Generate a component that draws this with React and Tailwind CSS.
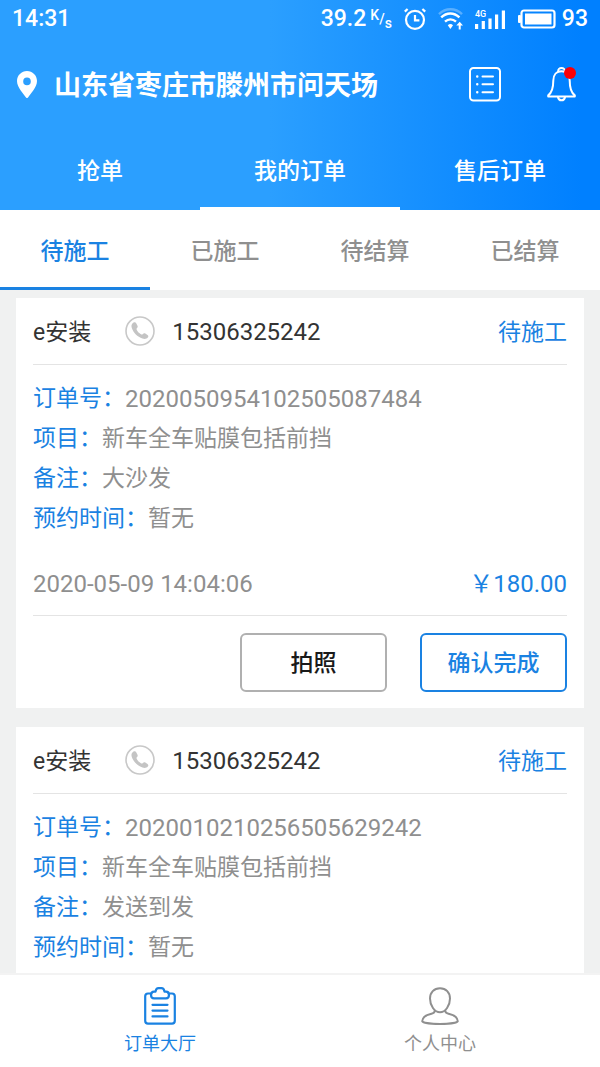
import { useState } from "react";

const topTabs = ["抢单", "我的订单", "售后订单"];
const statusTabs = ["待施工", "已施工", "待结算", "已结算"];

const orders = [
  {
    id: "2020050954102505087484",
    shop: "e安装",
    phone: "15306325242",
    status: "待施工",
    project: "新车全车贴膜包括前挡",
    remark: "大沙发",
    appointment: "暂无",
    time: "2020-05-09 14:04:06",
    price: "￥180.00",
  },
  {
    id: "2020010210256505629242",
    shop: "e安装",
    phone: "15306325242",
    status: "待施工",
    project: "新车全车贴膜包括前挡",
    remark: "发送到发",
    appointment: "暂无",
  },
];

const AlarmIcon = () => (
  <svg width="22" height="22" viewBox="0 0 22 22" fill="none" stroke="currentColor" strokeWidth="2.2">
    <circle cx="11" cy="11.8" r="9" />
    <path d="M11 7v5.4h4.4" />
    <path d="M.8 3.600 3.600 1M21.200 3.600 18.400 1" />
  </svg>
);

const WifiIcon = () => (
  <svg width="25" height="22" viewBox="0 0 25 22" fill="none" stroke="currentColor" strokeWidth="2.4">
    <path d="M1 6.200C7.500-.4 17.500-.4 24 6.200" opacity="0.3" />
    <path d="M3.200 9.400c5.400-5.200 12.800-5.200 18.200 0" />
    <path d="M7 13.600c3.200-3 7.800-3 11 0" />
    <path d="M9.800 17.200c1.600-1.500 3.600-1.500 5.200 0L12.400 21z" fill="currentColor" stroke="none" />
    <path d="M20.700 21.500v-4h-2.400l3.400-3.800 3.300 3.800h-2.300v4z" fill="currentColor" stroke="none" />
  </svg>
);

const SignalIcon = () => (
  <svg width="31" height="22" viewBox="0 0 31 22" fill="currentColor">
    <text x="0" y="9" fontSize="9" fontWeight="500">4G</text>
    <rect x="0" y="16" width="3.200" height="5" />
    <rect x="6.700" y="13" width="3.200" height="8" />
    <rect x="13.400" y="10.500" width="3.200" height="10.500" />
    <rect x="20" y="6.500" width="3.200" height="14.500" />
    <rect x="26.800" y="2.500" width="3.200" height="18.500" />
  </svg>
);

const BatteryIcon = () => (
  <svg width="38" height="20" viewBox="0 0 38 20" fill="currentColor">
    <rect x="0" y="6" width="3" height="8" rx="1" />
    <rect x="3.500" y="1.500" width="33" height="17" rx="2.500" fill="none" stroke="currentColor" strokeWidth="2.2" />
    <rect x="7" y="4.500" width="26.500" height="11" />
  </svg>
);

const PinIcon = () => (
  <svg width="20" height="27" viewBox="0 0 20 27" fill="currentColor">
    <path
      fillRule="evenodd"
      d="M10 0C4.500 0 0 4.400 0 9.900 0 16.500 6.500 22.500 9 26.400a1.200 1.200 0 0 0 2 0C13.500 22.500 20 16.500 20 9.900 20 4.400 15.500 0 10 0zm0 6.600a3.800 3.800 0 1 1 0 7.600 3.800 3.800 0 0 1 0-7.600z"
    />
  </svg>
);

const ListIcon = () => (
  <svg width="32" height="35" viewBox="0 0 32 35" fill="none" stroke="currentColor" strokeWidth="2" strokeLinecap="round">
    <rect x="1" y="1" width="30" height="32.500" rx="3.500" />
    <path d="M13.500 9.500h10.500M13.500 17.300h10.500M13.500 25.200h10.500" />
    <path d="M8.200 9.500h.1M8.200 17.300h.1M8.200 25.200h.1" strokeWidth="2.400" />
  </svg>
);

const BellIcon = () => (
  <svg width="29" height="35" viewBox="0 0 29 35" fill="none" stroke="currentColor" strokeWidth="2" strokeLinejoin="round" strokeLinecap="round">
    <path d="M11.200 4.600C10.900 2.200 12.500 1 14.500 1s3.600 1.200 3.300 3.600" />
    <path d="M14.500 4.200c-5.200 0-8.200 4-8.200 9.300 0 8-1.400 12.300-5.100 14.800v1.200h26.600v-1.200c-3.700-2.500-5.100-6.800-5.100-14.800 0-5.300-3-9.300-8.200-9.300z" />
    <path d="M11 30c.3 2.200 1.600 3.300 3.500 3.300s3.200-1.100 3.500-3.300" />
  </svg>
);

const PhoneIcon = () => (
  <svg width="30" height="30" viewBox="0 0 30 30" fill="none">
    <circle cx="15" cy="15" r="14" stroke="#c8c8c8" strokeWidth="1.600" />
    <path
      d="M8.200 6.800c1.300-.8 2.400-.6 3 .5l1.300 2.500c.4.900.2 1.600-.5 2.300-.6.600-.6 1.100-.2 1.900 1 1.800 2.300 3.200 4.100 4.200.8.500 1.400.4 2-.2.700-.8 1.500-.9 2.400-.4l2.200 1.300c1 .7 1.100 1.700.3 2.700-1.300 1.500-3.200 1.800-5.300 1-5.200-2-9-5.900-10.700-10.700-.7-2.100-.3-4 1.400-5.100z"
      fill="#c4c4c4"
    />
  </svg>
);

const ClipboardIcon = () => (
  <svg width="32" height="38" viewBox="0 0 32 38" fill="none" stroke="currentColor" strokeWidth="2.200" strokeLinejoin="round" strokeLinecap="round">
    <path d="M7.500 6.500H4A2.800 2.800 0 0 0 1.200 9.300v24.500A2.800 2.800 0 0 0 4 36.600h24a2.800 2.800 0 0 0 2.800-2.800V9.300A2.800 2.800 0 0 0 28 6.500h-3.500" />
    <path d="M11.500 4.600c.4-2.200 1.500-3.400 3-3.400h3c1.500 0 2.600 1.200 3 3.400h1.500c2 0 3 1.400 3 3.200s-1 3.600-3 3.600H10c-2 0-3-1.800-3-3.600s1-3.200 3-3.200z" />
    <path d="M8.500 17.800h15M8.500 23.600h15M8.500 29.400h15" />
  </svg>
);

const PersonIcon = () => (
  <svg width="38" height="38" viewBox="0 0 38 38" fill="none" stroke="currentColor" strokeWidth="2" strokeLinejoin="round">
    <path d="M19 1.200c-6 0-10 4.300-10 10.300 0 7 4.500 13.800 10 13.800s10-6.800 10-13.800C29 5.500 25 1.200 19 1.200z" />
    <path d="M13.800 23.200c.2 2.300-.8 3-3.300 3.600C5 28 1.500 29.800 1.200 34.200c0 1.200 7.800 2.700 17.800 2.700s17.800-1.500 17.800-2.700c-.3-4.400-3.800-6.200-9.300-7.400-2.500-.6-3.500-1.300-3.300-3.600" />
  </svg>
);

const StatusBar = () => (
  <div className="flex h-[38px] items-center justify-between px-3 text-[23px] font-medium">
    <span>14:31</span>
    <div className="flex items-center">
      <span>39.2</span>
      <span className="ml-1 flex h-6 text-sm leading-4">
        <span className="self-start">K</span>
        <span className="self-center">/</span>
        <span className="self-end">s</span>
      </span>
      <div className="ml-3 flex items-center gap-3">
        <AlarmIcon />
        <WifiIcon />
        <SignalIcon />
        <BatteryIcon />
      </div>
      <span className="ml-1.5">93</span>
    </div>
  </div>
);

const Field = ({ label, children, numeric }) => (
  <div className="flex h-10 items-center pt-1">
    <dt className="text-[#1a82e2]">{label}：</dt>
    <dd className={numeric ? "text-2xl" : ""}>{children}</dd>
  </div>
);

const OrderCard = ({ order }) => (
  <article className="bg-white px-[17px] pb-4">
    <header className="flex h-[67px] items-center border-b border-[#e4e4e4] text-[#333]">
      <h2 className="pt-1">{order.shop}</h2>
      <a href={`tel:${order.phone}`} className="ml-[34px] flex items-center gap-[17px] text-2xl">
        <PhoneIcon />
        <span className="pt-0.5">{order.phone}</span>
      </a>
      <span className="ml-auto pt-1 text-[#1a82e2]">{order.status}</span>
    </header>

    <dl className="pt-3 text-[#8f8f8f]">
      <Field label="订单号" numeric>{order.id}</Field>
      <Field label="项目">{order.project}</Field>
      <Field label="备注">{order.remark}</Field>
      <Field label="预约时间">{order.appointment}</Field>
    </dl>

    {order.price && (
      <>
        <div className="mt-3 flex h-[67px] items-center justify-between border-b border-[#e4e4e4] pt-1 text-2xl">
          <time className="text-[#8f8f8f]">{order.time}</time>
          <span className="text-[#1a82e2]">{order.price}</span>
        </div>

        <div className="mt-[17px] flex justify-end gap-[33px] font-medium">
          <button className="h-[59px] w-[147px] rounded-md border-2 border-[#b0b0b0] pt-1 text-[#1a1a1a]">
            拍照
          </button>
          <button className="h-[59px] w-[147px] rounded-md border-2 border-[#1a82e2] pt-1 text-[#1a82e2]">
            确认完成
          </button>
        </div>
      </>
    )}
  </article>
);

export default function App() {
  const [topTab, setTopTab] = useState("我的订单");
  const [statusTab, setStatusTab] = useState("待施工");

  return (
    <div className="flex h-screen flex-col bg-[#f0f1f1] font-[Roboto,'Noto_Sans_CJK_SC',sans-serif] text-[23px]">
      <div className="shrink-0 bg-[linear-gradient(90deg,#2b9fff_45%,#0080ff_97%)] text-white">
        <StatusBar />

        {/* 定位 */}
        <div className="flex h-[92px] items-center pl-[17px] pr-6">
          <PinIcon />
          <h1 className="ml-[17px] pt-1 text-[27px] font-bold">山东省枣庄市滕州市问天场</h1>
          <button aria-label="订单列表" className="ml-auto">
            <ListIcon />
          </button>
          <button aria-label="消息" className="relative ml-[46px]">
            <BellIcon />
            <span className="absolute right-0 top-0 size-3 rounded-full bg-[#fb0007]" />
          </button>
        </div>

        <nav className="flex h-20">
          {topTabs.map((tab) => (
            <button
              key={tab}
              onClick={() => setTopTab(tab)}
              className={`flex-1 border-y-3 border-t-transparent pt-1 font-medium ${
                tab === topTab ? "border-b-white" : "border-b-transparent"
              }`}
            >
              {tab}
            </button>
          ))}
        </nav>
      </div>

      <nav className="flex h-20 shrink-0 bg-white">
        {statusTabs.map((tab) => (
          <button
            key={tab}
            onClick={() => setStatusTab(tab)}
            className={`flex-1 border-y-3 border-t-transparent pt-1 font-medium ${
              tab === statusTab
                ? "border-b-[#1a82e2] text-[#1a82e2]"
                : "border-b-transparent text-[#8f8f8f]"
            }`}
          >
            {tab}
          </button>
        ))}
      </nav>

      {/* 订单列表 */}
      <main className="flex min-h-0 flex-1 flex-col gap-[19px] overflow-y-auto px-4 pt-2 [scrollbar-width:none]">
        {orders.map((order) => (
          <OrderCard key={order.id} order={order} />
        ))}
      </main>

      <nav className="flex h-[94px] shrink-0 border-t-2 border-[#f3f3f3] bg-white px-5 text-lg leading-6">
        <a href="#orders" className="flex flex-1 flex-col items-center gap-[7px] pt-3 text-[#1a82e2]">
          <ClipboardIcon />
          订单大厅
        </a>
        <a href="#me" className="flex flex-1 flex-col items-center gap-[7px] pt-3 text-[#8f8f8f]">
          <PersonIcon />
          个人中心
        </a>
      </nav>
    </div>
  );
}
